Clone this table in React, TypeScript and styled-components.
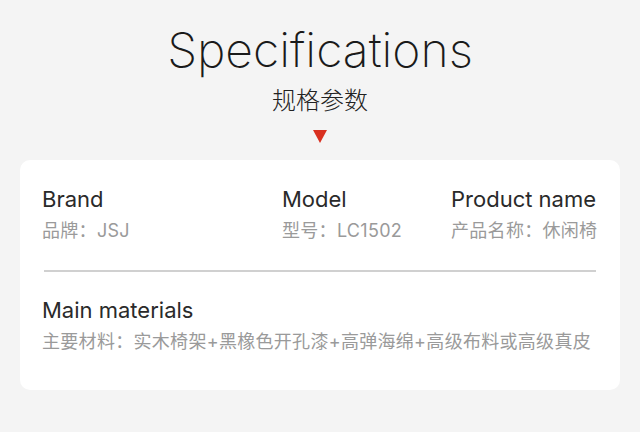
import React from "react";
import styled, { createGlobalStyle } from "styled-components";

const specs = [
  { title: "Brand", value: "品牌：JSJ" },
  { title: "Model", value: "型号：LC1502" },
  { title: "Product name", value: "产品名称：休闲椅" },
];

const App = () => {
  return (
    <>
      <GlobalStyle />
      <Page>
        <Header>
          <Title>Specifications</Title>
          <Subtitle>规格参数</Subtitle>
          <Arrow />
        </Header>
        <Card>
          <SpecRow>
            {specs.map((item) => (
              <SpecItem key={item.title}>
                <SpecTitle>{item.title}</SpecTitle>
                <SpecValue>{item.value}</SpecValue>
              </SpecItem>
            ))}
          </SpecRow>
          <Divider />
          <SpecItem>
            <SpecTitle>Main materials</SpecTitle>
            <SpecValue>主要材料：实木椅架+黑橡色开孔漆+高弹海绵+高级布料或高级真皮</SpecValue>
          </SpecItem>
        </Card>
      </Page>
    </>
  );
};

const GlobalStyle = createGlobalStyle`
  body {
    margin: 0;
    background: #f4f4f4;
    font-family: "Inter", "Noto Sans CJK SC", sans-serif;
  }
`;

const Page = styled.div`
  width: 640px;
  height: 432px;
  background: #f4f4f4;
  overflow: hidden;
`;

const Header = styled.div`
  display: flex;
  flex-direction: column;
  align-items: center;
  padding-top: 22px;
`;

const Title = styled.h1`
  margin: 0;
  font-family: "Inter", sans-serif;
  font-weight: 200;
  font-size: 48px;
  line-height: 56px;
  color: #1a1a1a;
`;

const Subtitle = styled.div`
  margin-top: 6px;
  font-family: "Noto Sans CJK SC", sans-serif;
  font-weight: 300;
  font-size: 24px;
  line-height: 30px;
  color: #222;
`;

const Arrow = styled.div`
  margin-top: 16px;
  width: 0;
  height: 0;
  border-left: 7.5px solid transparent;
  border-right: 7.5px solid transparent;
  border-top: 13px solid #d93020;
`;

const Card = styled.div`
  margin: 17px 20px 0;
  height: 230px;
  box-sizing: border-box;
  background: #fff;
  border-radius: 10px;
  padding: 26px 22px 0;
`;

const SpecRow = styled.div`
  display: grid;
  grid-template-columns: 240px 169px auto;
`;

const SpecItem = styled.div`
  display: flex;
  flex-direction: column;
  gap: 7px;
`;

const SpecTitle = styled.div`
  font-size: 22px;
  line-height: 26px;
  color: #2a2a2a;
`;

const SpecValue = styled.div`
  font-size: 18px;
  line-height: 24px;
  letter-spacing: 0.3px;
  color: #9a9a9a;
  white-space: nowrap;
`;

const Divider = styled.div`
  height: 2px;
  background: #d0d0d0;
  margin: 27px 2px 25px;
`;

export default App;
